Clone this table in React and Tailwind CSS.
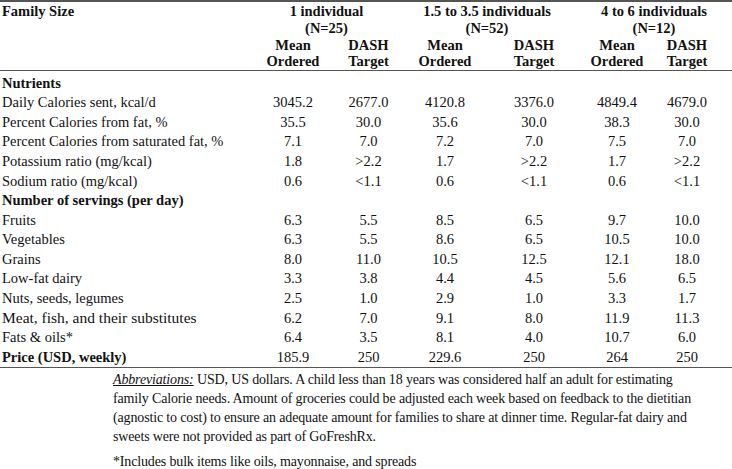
import React from 'react';

const grid = 'grid grid-cols-[255px_76px_75px_78px_100px_66px_74px]';

const rows = [
    { label: 'Nutrients', bold: true },
    { label: 'Daily Calories sent, kcal/d', values: ['3045.2', '2677.0', '4120.8', '3376.0', '4849.4', '4679.0'] },
    { label: 'Percent Calories from fat, %', values: ['35.5', '30.0', '35.6', '30.0', '38.3', '30.0'] },
    { label: 'Percent Calories from saturated fat, %', values: ['7.1', '7.0', '7.2', '7.0', '7.5', '7.0'] },
    { label: 'Potassium ratio (mg/kcal)', values: ['1.8', '>2.2', '1.7', '>2.2', '1.7', '>2.2'] },
    { label: 'Sodium ratio (mg/kcal)', values: ['0.6', '<1.1', '0.6', '<1.1', '0.6', '<1.1'] },
    { label: 'Number of servings (per day)', bold: true },
    { label: 'Fruits', values: ['6.3', '5.5', '8.5', '6.5', '9.7', '10.0'] },
    { label: 'Vegetables', values: ['6.3', '5.5', '8.6', '6.5', '10.5', '10.0'] },
    { label: 'Grains', values: ['8.0', '11.0', '10.5', '12.5', '12.1', '18.0'] },
    { label: 'Low-fat dairy', values: ['3.3', '3.8', '4.4', '4.5', '5.6', '6.5'] },
    { label: 'Nuts, seeds, legumes', values: ['2.5', '1.0', '2.9', '1.0', '3.3', '1.7'] },
    { label: 'Meat, fish, and their substitutes', big: true, values: ['6.2', '7.0', '9.1', '8.0', '11.9', '11.3'] },
    { label: 'Fats & oils*', values: ['6.4', '3.5', '8.1', '4.0', '10.7', '6.0'] },
    { label: 'Price (USD, weekly)', bold: true, values: ['185.9', '250', '229.6', '250', '264', '250'] },
];

const SubHead = ({ top, bottom }) => (
    <div className="text-center font-bold">
        {top}
        <br />
        {bottom}
    </div>
);

const App = () => {
    return (
        <div className="w-[732px] h-[469px] bg-white text-[#111] font-['Liberation_Serif',serif] text-[14.5px] overflow-hidden">
            {/* Header */}
            <div className="border-t-2 border-b-[1.5px] border-[#555] pt-[1px] pr-2 leading-[16.75px]">
                <div className={grid}>
                    <div className="row-span-2 pl-[2px] font-bold">Family Size</div>
                    <div className="col-span-2 pr-[8px] text-center font-bold">
                        1 individual
                        <br />
                        (N=25)
                    </div>
                    <div className="col-span-2 pr-[16px] text-center font-bold">
                        1.5 to 3.5 individuals
                        <br />
                        (N=52)
                    </div>
                    <div className="col-span-2 text-center font-bold">
                        4 to 6 individuals
                        <br />
                        (N=12)
                    </div>
                    <div className="col-start-2">
                        <SubHead top="Mean" bottom="Ordered" />
                    </div>
                    <SubHead top="DASH" bottom="Target" />
                    <SubHead top="Mean" bottom="Ordered" />
                    <SubHead top="DASH" bottom="Target" />
                    <SubHead top="Mean" bottom="Ordered" />
                    <SubHead top="DASH" bottom="Target" />
                </div>
            </div>

            {/* Body */}
            <div className="border-b-[1.5px] border-[#555] pt-[2px] pr-2">
                {rows.map((row) => (
                    <div key={row.label} className={`${grid} h-[19.6px] items-center leading-none`}>
                        <div className={`pl-[2px] whitespace-nowrap ${row.bold ? 'font-bold' : ''} ${row.big ? 'text-[15.5px]' : ''}`}>
                            {row.label}
                        </div>
                        {(row.values || []).map((v, i) => (
                            <div key={i} className="text-center">
                                {v}
                            </div>
                        ))}
                    </div>
                ))}
            </div>

            {/* Notes */}
            <div className="pl-[113px] pt-[2px] text-[14px] tracking-[-0.15px] leading-[19px] whitespace-nowrap">
                <p>
                    <span className="italic underline">Abbreviations:</span> USD, US dollars. A child less than 18 years was considered half an adult for estimating
                    <br />
                    family Calorie needs. Amount of groceries could be adjusted each week based on feedback to the dietitian
                    <br />
                    (agnostic to cost) to ensure an adequate amount for families to share at dinner time. Regular-fat dairy and
                    <br />
                    sweets were not provided as part of GoFreshRx.
                </p>
                <p className="mt-[6px]">*Includes bulk items like oils, mayonnaise, and spreads</p>
            </div>
        </div>
    );
};

export default App;
